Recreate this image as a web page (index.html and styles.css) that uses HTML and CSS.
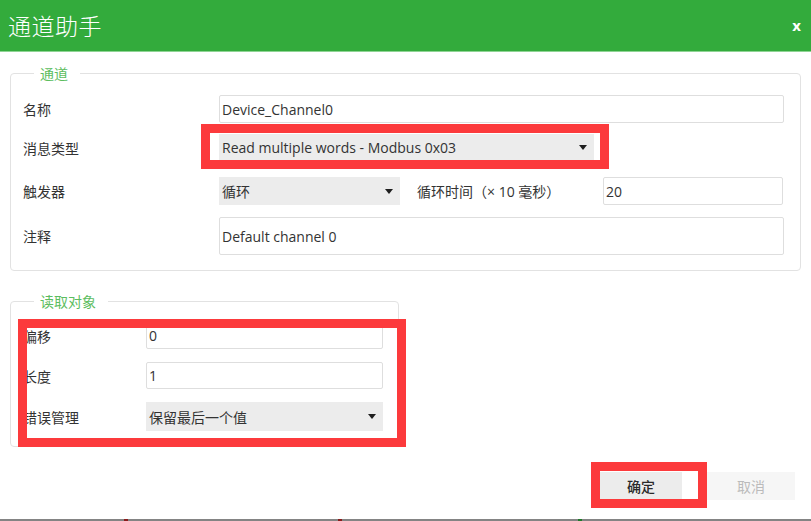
FILE: index.html
```html
<!DOCTYPE html>
<html lang="zh">
<head>
<meta charset="utf-8">
<title>通道助手</title>
<link rel="stylesheet" href="styles.css">
</head>
<body>
<div class="dialog">
  <header class="titlebar">
    <span class="title">通道助手</span>
    <span class="close">x</span>
  </header>

  <fieldset class="group group-channel">
    <legend>通道</legend>
    <div class="row row-name">
      <label class="lbl">名称</label>
      <div class="field input wide">Device_Channel0</div>
    </div>
    <div class="row row-type">
      <label class="lbl">消息类型</label>
      <div class="field select type-select">
        <span>Read multiple words - Modbus 0x03</span>
        <i class="caret"></i>
        <div class="mark mark-type"></div>
      </div>
    </div>
    <div class="row row-trigger">
      <label class="lbl">触发器</label>
      <div class="field select trigger-select">
        <span>循环</span>
        <i class="caret"></i>
      </div>
      <label class="lbl2">循环时间（× 10 毫秒）</label>
      <div class="field input cycle">20</div>
    </div>
    <div class="row row-note">
      <label class="lbl">注释</label>
      <div class="field input wide note">Default channel 0</div>
    </div>
  </fieldset>

  <fieldset class="group group-read">
    <legend>读取对象</legend>
    <div class="row row-offset">
      <label class="lbl">偏移</label>
      <div class="field input">0</div>
    </div>
    <div class="row row-length">
      <label class="lbl">长度</label>
      <div class="field input">1</div>
    </div>
    <div class="row row-error">
      <label class="lbl">错误管理</label>
      <div class="field select">
        <span>保留最后一个值</span>
        <i class="caret"></i>
      </div>
    </div>
    <div class="mark mark-read"></div>
  </fieldset>

  <div class="actions">
    <button class="btn btn-ok">确定<span class="mark mark-ok"></span></button>
    <button class="btn btn-cancel">取消</button>
  </div>

  <div class="taskbar">
    <i class="tick red t1"></i>
    <i class="tick red t2"></i>
    <i class="tick green t3"></i>
  </div>
</div>
</body>
</html>
```

FILE: styles.css
```css
* { box-sizing: border-box; }

html, body {
  margin: 0;
  padding: 0;
  background: #ffffff;
}

body {
  font-family: "Open Sans", "Noto Sans CJK SC", sans-serif;
  font-size: 14px;
  color: #333333;
}

.dialog {
  width: 811px;
  height: 521px;
  display: flex;
  flex-direction: column;
  overflow: hidden;
}

.titlebar {
  height: 52px;
  flex: none;
  background: #33ab3c;
  border-bottom: 1px solid #8fd494;
  display: flex;
  align-items: center;
  justify-content: space-between;
  padding: 0 10px 2px 8px;
  color: #ffffff;
}

.title {
  font-family: "Noto Sans CJK SC", sans-serif;
  font-size: 23px;
  font-weight: 300;
  letter-spacing: 0.5px;
}

.close {
  font-family: "Noto Sans", sans-serif;
  font-size: 15px;
  line-height: 20px;
  font-weight: 700;
  color: #ffffff;
}

.group {
  margin: 12px 0 0 10px;
  border: 1px solid #e2e2e2;
  border-radius: 4px;
  padding: 0;
  min-width: 0;
}

.group legend {
  margin-left: 11px;
  padding: 0 12px 0 6px;
  font-family: "Noto Sans CJK SC", sans-serif;
  font-size: 14px;
  line-height: 18px;
  color: #5cbd60;
}

.group-channel {
  width: 791px;
  padding: 13px 16px 15px 12px;
}

.group-read {
  position: relative;
  width: 389px;
  margin-top: 21px;
  padding: 12px 15px 15px 12px;
}

.row {
  display: flex;
  align-items: center;
}

.lbl {
  flex: none;
  font-family: "Noto Sans CJK SC", sans-serif;
  font-size: 14px;
  color: #333;
}

.group-channel .lbl { width: 196px; }
.group-read .lbl { width: 123px; }

.lbl2 {
  flex: none;
  width: 186px;
  margin-left: 17px;
  font-family: "Open Sans", "Noto Sans CJK SC", sans-serif;
  font-size: 14px;
  color: #333;
}

.field {
  position: relative;
  flex: 1;
  height: 28px;
  display: flex;
  align-items: center;
  padding: 0 2px;
  font-family: "Open Sans", "Noto Sans CJK SC", sans-serif;
  font-size: 14px;
  color: #333;
  white-space: nowrap;
}

.input {
  border: 1px solid #dedede;
  border-radius: 2px;
  background: #fff;
}

.select {
  background: #ececec;
  justify-content: space-between;
  padding: 0 7px 0 3px;
}

.caret {
  width: 0;
  height: 0;
  border-left: 4px solid transparent;
  border-right: 4px solid transparent;
  border-top: 5px solid #1e1e1e;
}

.row-type { margin-top: 11px; }
.row-type .field { flex: none; width: 375px; height: 27px; }

.row-trigger { margin-top: 16px; }
.trigger-select { flex: none; width: 181px; }
.cycle { flex: none; width: 180px; }

.row-note { margin-top: 12px; }
.note { height: 38px; }

.row-offset .field,
.row-length .field { height: 27px; }
.row-length { margin-top: 13px; }
.row-error { margin-top: 13px; }
.row-error .field { height: 29px; }

/* red annotation frames */
.mark {
  position: absolute;
  border: 9px solid #fc3a3c;
  pointer-events: none;
}

.mark-type {
  left: -18px;
  top: -10px;
  right: -15px;
  bottom: -8px;
}

.mark-read {
  left: 7px;
  top: 9px;
  right: -8px;
  bottom: -1px;
}

.actions {
  display: flex;
  justify-content: flex-end;
  gap: 25px;
  margin-top: 25px;
  padding-right: 16px;
}

.btn {
  position: relative;
  height: 28px;
  border: none;
  border-radius: 0;
  padding: 0;
  font-family: "Noto Sans CJK SC", sans-serif;
  font-size: 14px;
}

.btn-ok {
  width: 82px;
  background: #ececec;
  color: #2a2a2a;
  font-weight: 500;
}

.btn-cancel {
  width: 88px;
  background: #f6f6f6;
  color: #bbbbbb;
}

.mark-ok {
  left: -9px;
  top: -10px;
  right: -25px;
  bottom: -8px;
}

.taskbar {
  position: relative;
  margin-top: auto;
  height: 2px;
  background: #848484;
  flex: none;
}

.tick {
  position: absolute;
  top: 0;
  width: 4px;
  height: 2px;
}
.tick.red { background: #8a1c1c; }
.tick.green { background: #1f7a2a; }
.t1 { left: 124px; }
.t2 { left: 338px; }
.t3 { left: 578px; }
```
